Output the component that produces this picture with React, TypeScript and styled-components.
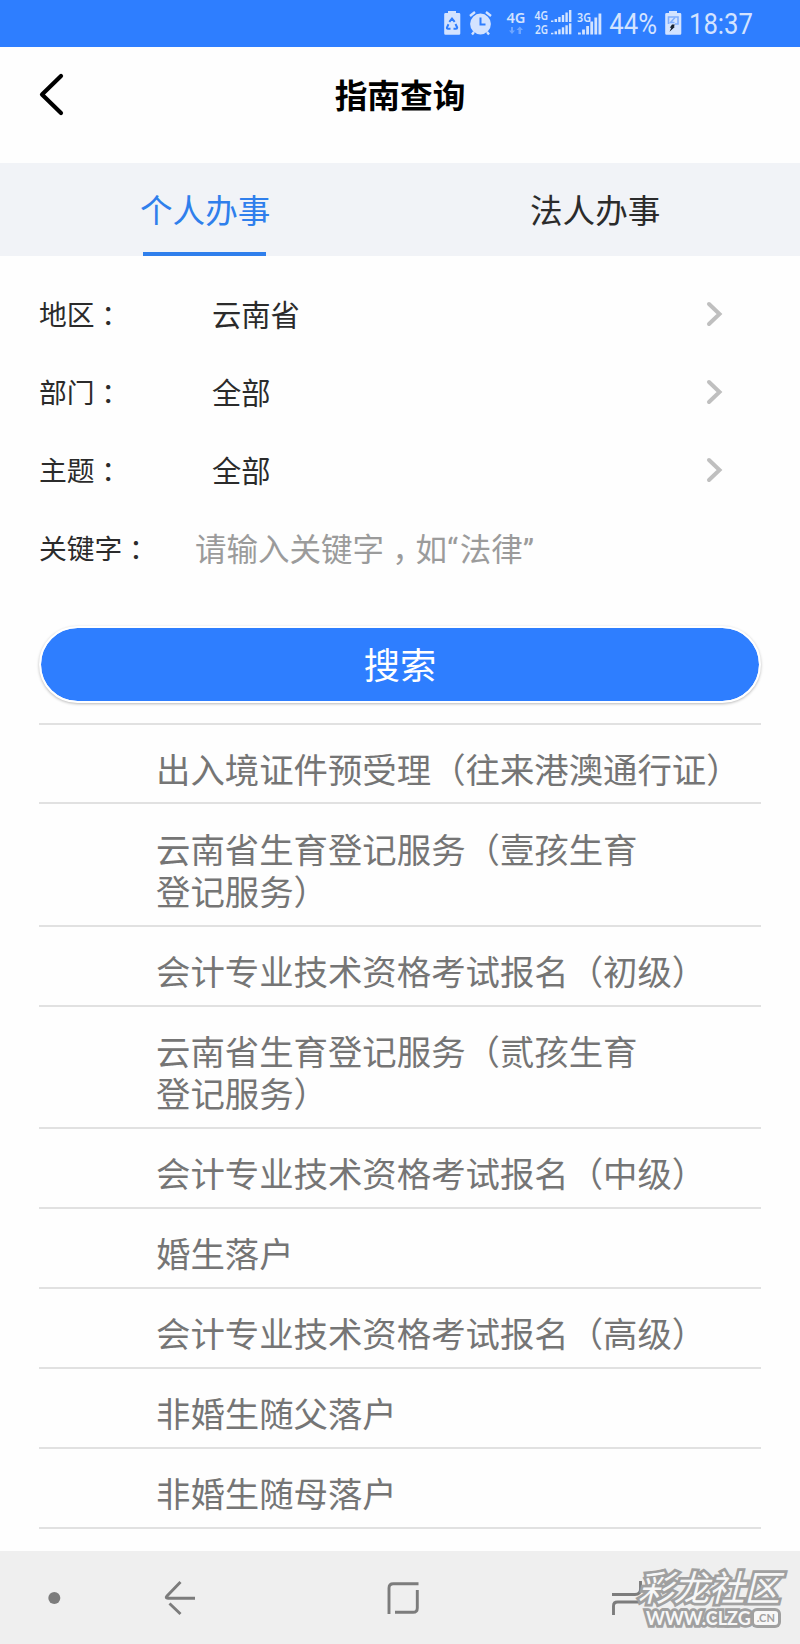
import React from 'react';
import styled, { createGlobalStyle } from 'styled-components';

const Global = createGlobalStyle`
  * { box-sizing: border-box; }
  body { margin: 0; background: #fefefe; font-family: "Noto Sans CJK SC", sans-serif; color: #2b2b2b; }
`;

const Screen = styled.div`
  width: 800px;
  height: 1644px;
  display: flex;
  flex-direction: column;
  overflow: hidden;
`;

const StatusBar = styled.header`
  flex: none;
  height: 46.5px;
  background: #2e7eff;
  color: #d3e3ff;
  display: flex;
  align-items: flex-start;
  padding-left: 443px;
  svg { display: block; }
`;

const StatusIcons = styled.svg`
  flex: none;
  width: 160px;
  height: 46px;
`;

const StatusText = styled.span<{ $width: number }>`
  width: ${p => p.$width}px;
  font: 400 29.5px/46px Roboto, sans-serif;
  padding-top: 1px;
  white-space: nowrap;
`;

const Scaled = styled.span`
  display: inline-block;
  transform: scaleX(0.87);
  transform-origin: left center;
`;

const BatteryIcon = styled.svg`
  flex: none;
  width: 24px;
  height: 46px;
  margin-right: 4px;
`;

const TitleBar = styled.div`
  flex: none;
  height: 116px;
  display: grid;
  grid-template-columns: 80px 1fr 80px;
  align-items: start;
`;

const BackIcon = styled.svg`
  width: 30px;
  height: 46px;
  margin: 24.5px 0 0 37px;
`;

const Title = styled.h1`
  margin: 0;
  padding-top: 22.5px;
  font-size: 32.7px;
  line-height: 50px;
  font-weight: 700;
  text-align: center;
  color: #000;
`;

const Tabs = styled.nav`
  flex: none;
  height: 93.5px;
  background: #f1f3f7;
  display: flex;
  justify-content: space-between;
  padding: 0 139px 0 140px;
`;

const Tab = styled.div<{ $active?: boolean }>`
  height: 93.5px;
  width: 131px;
  font-size: 32.6px;
  line-height: 50px;
  padding-top: 21.5px;
  color: ${p => (p.$active ? '#2f7fec' : '#2b2b2b')};
  white-space: nowrap;
  &::after {
    content: '';
    display: block;
    height: 4px;
    width: 123px;
    margin: 18px 0 0 3px;
    background: ${p => (p.$active ? '#2f7fec' : 'transparent')};
  }
`;

const Form = styled.section`
  flex: none;
  height: 369.5px;
  padding: 18.5px 39px 0;
`;

const Field = styled.div`
  height: 77.8px;
  display: flex;
  align-items: center;
`;

const Label = styled.div<{ $width: number }>`
  width: ${p => p.$width}px;
  font-size: 27.8px;
  white-space: nowrap;
`;

// Full-width punctuation set in the middle of its em square.
const Mark = styled.span<{ $shift: number }>`
  display: inline-block;
  width: 1em;
  text-indent: ${p => p.$shift}em;
`;

const Value = styled.div`
  flex: 1;
  font-size: 29.3px;
`;

const Placeholder = styled.div`
  font-size: 31.5px;
  color: #9b9b9b;
  white-space: nowrap;
`;

const Quote = styled.span`
  font-family: Roboto, sans-serif;
  letter-spacing: 1.5px;
`;

const Chevron = styled.svg`
  width: 20px;
  height: 28px;
  margin-right: 37px;
`;

const SearchButton = styled.button`
  flex: none;
  width: 722px;
  height: 77px;
  margin: 0 39px;
  padding: 0 0 3px;
  border: 2px solid #fff;
  border-radius: 39px;
  background: #2e7eff;
  background-clip: padding-box;
  box-shadow: 0 1px 3px rgba(0, 0, 0, 0.28);
  color: #fff;
  font: 400 36.3px/50px "Noto Sans CJK SC", sans-serif;
`;

const List = styled.ul`
  list-style: none;
  margin: 20px 39px 0;
  padding: 0;
  border-top: 2px solid #e1e1e1;
`;

const Item = styled.li`
  border-bottom: 2px solid #e1e1e1;
  padding: 22.2px 0 13.5px 117px;
  font-size: 34.4px;
  line-height: 42.3px;
  color: #757575;
  white-space: nowrap;
`;

const Line = styled.div``;

const NavBar = styled.footer`
  position: relative;
  flex: none;
  height: 93.5px;
  margin-top: auto;
  background: #efefef;
`;

const NavIcons = styled.svg`
  display: block;
  width: 800px;
  height: 94px;
`;

const Watermark = styled.div`
  position: absolute;
  left: 638px;
  top: 13px;
  width: 152px;
  color: #f7f7f7;
  -webkit-text-stroke: 5.5px #a0a0a0;
  paint-order: stroke fill;
  stroke-linejoin: round;
`;

const WatermarkName = styled.div`
  font-size: 35.5px;
  line-height: 44px;
  font-style: italic;
  font-weight: 400;
  white-space: nowrap;
`;

const WatermarkSite = styled.div`
  display: flex;
  align-items: center;
  font: 700 18px/20px Lato, sans-serif;
  padding-left: 8px;
  white-space: nowrap;
`;

const Suffix = styled.span`
  margin-left: 3px;
  padding: 0 3px;
  border-radius: 3px;
  background: #f7f7f7;
  box-shadow: 0 0 0 3px #a0a0a0;
  color: #a0a0a0;
  font-size: 11px;
  line-height: 14px;
  -webkit-text-stroke: 0;
`;

const filters = [
  { label: '地区', value: '云南省' },
  { label: '部门', value: '全部' },
  { label: '主题', value: '全部' },
];

const services = [
  ['出入境证件预受理（往来港澳通行证）'],
  ['云南省生育登记服务（壹孩生育', '登记服务）'],
  ['会计专业技术资格考试报名（初级）'],
  ['云南省生育登记服务（贰孩生育', '登记服务）'],
  ['会计专业技术资格考试报名（中级）'],
  ['婚生落户'],
  ['会计专业技术资格考试报名（高级）'],
  ['非婚生随父落户'],
  ['非婚生随母落户'],
];

// Signal strength: a row of bars rising to the right.
const Bars = ({ x, bottom, heights, step, width }: { x: number; bottom: number; heights: number[]; step: number; width: number }) => (
  <g>
    {heights.map((h, i) => (
      <rect key={i} x={x + i * step} y={bottom - h} width={width} height={h} />
    ))}
  </g>
);

export default function App() {
  return (
    <Screen>
      <Global />
      <StatusBar>
        <StatusIcons viewBox="443 0 160 46" fill="currentColor">
          <path d="M448 11h8v2h3q1.300 0 1.300 1.300v19.200q0 1.300-1.300 1.300h-13.500q-1.300 0-1.300-1.300v-19.200q0-1.300 1.300-1.300h2.500z" />
          <path d="M449.300 21.800l2.700-3.300 2.700 3.300M455.500 24l1.700 3.500q0 1.200-1.200 1.200h-2.500M450.500 28.700h-2.500q-1.500 0-1-1.400l1.500-3" fill="none" stroke="#2e7eff" strokeWidth="2" />
          <circle cx="480.500" cy="24" r="10.400" />
          <path d="M470 16l5-4M491 16l-5-4M474 32l-2 2.500M487 32l2 2.500" stroke="currentColor" strokeWidth="2.400" />
          <path d="M480.500 17.500v7h5" fill="none" stroke="#2e7eff" strokeWidth="2" />
          <g fontFamily="Noto Sans" fontWeight="600">
            <text x="506.500" y="22.500" fontSize="15" textLength="19" lengthAdjust="spacingAndGlyphs">4G</text>
            <text x="534.500" y="20" fontSize="12" textLength="13.500" lengthAdjust="spacingAndGlyphs">4G</text>
            <text x="535" y="34" fontSize="12" textLength="13" lengthAdjust="spacingAndGlyphs">2G</text>
            <text x="577" y="21.500" fontSize="12" textLength="14" lengthAdjust="spacingAndGlyphs">3G</text>
          </g>
          <path d="M511 27h2v3.500h2l-3 3.500-3-3.500h2zM518.500 34h2.500v-4h2l-3.200-3.500-3.300 3.500h2z" opacity=".4" />
          <Bars x={551} bottom={22} heights={[1.5, 3, 5, 7, 9.5, 12]} step={3.6} width={2.4} />
          <Bars x={551} bottom={34.3} heights={[1.5, 3, 5, 7, 9, 11]} step={3.6} width={2.4} />
          <Bars x={578} bottom={34.5} heights={[2, 5, 8.5, 13, 17, 21]} step={4.1} width={2.8} />
        </StatusIcons>
        <StatusText $width={58}><Scaled>&nbsp;44%</Scaled></StatusText>
        <BatteryIcon viewBox="661 0 24 46" fill="currentColor">
          <path d="M669 11h8v2h3q1.300 0 1.300 1.300v19.200q0 1.300-1.300 1.300h-13.500q-1.300 0-1.300-1.300v-19.200q0-1.300 1.300-1.300h2.500z" />
          <path d="M668.500 24v-7h9.500v7h-3" fill="none" stroke="#7faeff" strokeWidth="1.600" />
          <path d="M675 17.500l-4.500 5h4" fill="none" stroke="#7faeff" strokeWidth="1.500" />
          <path d="M672 24.500h2.800l-1 2.200h1.200l-5.500 5 1.800-4h-1.500z" fill="#17212f" />
        </BatteryIcon>
        <StatusText $width={70}><Scaled>18:37</Scaled></StatusText>
      </StatusBar>

      <TitleBar>
        <BackIcon viewBox="37 71 30 46">
          <path d="M61 76L42 94.500L61 113" fill="none" stroke="#000" strokeWidth="4.200" strokeLinecap="round" strokeLinejoin="round" />
        </BackIcon>
        <Title>指南查询</Title>
      </TitleBar>

      <Tabs>
        <Tab $active>个人办事</Tab>
        <Tab>法人办事</Tab>
      </Tabs>

      <Form>
        {filters.map(f => (
          <Field key={f.label}>
            <Label $width={173}>{f.label}<Mark $shift={0.24}>：</Mark></Label>
            <Value>{f.value}</Value>
            <Chevron viewBox="0 0 20 28">
              <path d="M5 5l10.500 10L5 25" fill="none" stroke="#bfbfbf" strokeWidth="4" strokeLinecap="round" />
            </Chevron>
          </Field>
        ))}
        <Field>
          <Label $width={156}>关键字<Mark $shift={0.24}>：</Mark></Label>
          <Placeholder>
            请输入关键字<Mark $shift={0.26}>，</Mark>如<Quote>“</Quote>法律<Quote>”</Quote>
          </Placeholder>
        </Field>
      </Form>

      <SearchButton>搜索</SearchButton>

      <List>
        {services.map(lines => (
          <Item key={lines[0]}>
            {lines.map(line => <Line key={line}>{line}</Line>)}
          </Item>
        ))}
      </List>

      <NavBar>
        <NavIcons viewBox="0 1551 800 94" fill="none" stroke="#7c7c7c" strokeWidth="2.900">
          <circle cx="54.300" cy="1598" r="6" fill="#7c7c7c" stroke="none" />
          <path d="M180.500 1582l-13.500 14q-2 2.300 1 2.300H195M169.500 1603.500l11 10.500" />
          <path d="M389 1614v-26q0-4.300 4.300-4.300H418.500M417.300 1590v18q0 4.300-4.300 4.300H395" />
          <path d="M612 1594.500h23q5.500 0 5.500-5.500V1581M613.500 1615v-9q0-4 4-4H641" />
        </NavIcons>
        <Watermark>
          <WatermarkName>彩龙社区</WatermarkName>
          <WatermarkSite>WWW.CLZG<Suffix>.CN</Suffix></WatermarkSite>
        </Watermark>
      </NavBar>
    </Screen>
  );
}
